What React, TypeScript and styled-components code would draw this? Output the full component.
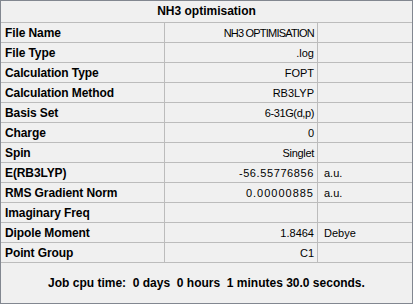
import React from "react";
import styled, { createGlobalStyle } from "styled-components";

const GlobalStyle = createGlobalStyle`
  html, body {
    margin: 0;
    padding: 0;
    background: #ffffff;
  }
  * { box-sizing: border-box; }
`;

const Frame = styled.div`
  width: 413px;
  height: 304px;
  border: 1px solid #828790;
  background: #f0f0f0;
  display: flex;
  flex-direction: column;
  font-family: "Liberation Sans", Arial, sans-serif;
  color: #000;
`;

const Title = styled.div`
  height: 22px;
  border-bottom: 1px solid #bcbcbc;
  display: flex;
  align-items: center;
  justify-content: center;
  font-weight: bold;
  font-size: 12px;
  padding-bottom: 1px;
`;

const Row = styled.div`
  display: grid;
  grid-template-columns: 164px 153px 94px;
  height: 20px;
  border-bottom: 1px solid #bcbcbc;
`;

const Label = styled.div`
  border-right: 1px solid #bcbcbc;
  display: flex;
  align-items: center;
  padding-left: 4px;
  font-weight: bold;
  font-size: 12px;
  letter-spacing: -0.1px;
  white-space: nowrap;
`;

const Value = styled.div<{ $track: number }>`
  border-right: 1px solid #bcbcbc;
  display: flex;
  align-items: center;
  justify-content: flex-end;
  padding-right: 3px;
  font-size: 11px;
  letter-spacing: ${(p) => p.$track}px;
  white-space: nowrap;
`;

const Unit = styled.div`
  display: flex;
  align-items: center;
  padding-left: 6px;
  font-size: 11px;
  white-space: nowrap;
`;

const Footer = styled.div`
  flex: 1;
  display: flex;
  align-items: center;
  justify-content: center;
  font-weight: bold;
  font-size: 12px;
  white-space: pre;
`;

type RowData = { label: string; value: string; unit: string; track: number };

const rows: RowData[] = [
  { label: "File Name", value: "NH3 OPTIMISATION", unit: "", track: -0.8 },
  { label: "File Type", value: ".log", unit: "", track: 0 },
  { label: "Calculation Type", value: "FOPT", unit: "", track: 0 },
  { label: "Calculation Method", value: "RB3LYP", unit: "", track: 0 },
  { label: "Basis Set", value: "6-31G(d,p)", unit: "", track: -0.4 },
  { label: "Charge", value: "0", unit: "", track: 0 },
  { label: "Spin", value: "Singlet", unit: "", track: -0.3 },
  { label: "E(RB3LYP)", value: "-56.55776856", unit: "a.u.", track: 0.6 },
  { label: "RMS Gradient Norm", value: "0.00000885", unit: "a.u.", track: 1 },
  { label: "Imaginary Freq", value: "", unit: "", track: 0 },
  { label: "Dipole Moment", value: "1.8464", unit: "Debye", track: 0 },
  { label: "Point Group", value: "C1", unit: "", track: 0 },
];

export default function App() {
  return (
    <>
      <GlobalStyle />
      <Frame>
        <Title>NH3 optimisation</Title>
        {rows.map((r) => (
          <Row key={r.label}>
            <Label>{r.label}</Label>
            <Value $track={r.track}>{r.value}</Value>
            <Unit>{r.unit}</Unit>
          </Row>
        ))}
        <Footer>{"Job cpu time:  0 days  0 hours  1 minutes 30.0 seconds."}</Footer>
      </Frame>
    </>
  );
}
